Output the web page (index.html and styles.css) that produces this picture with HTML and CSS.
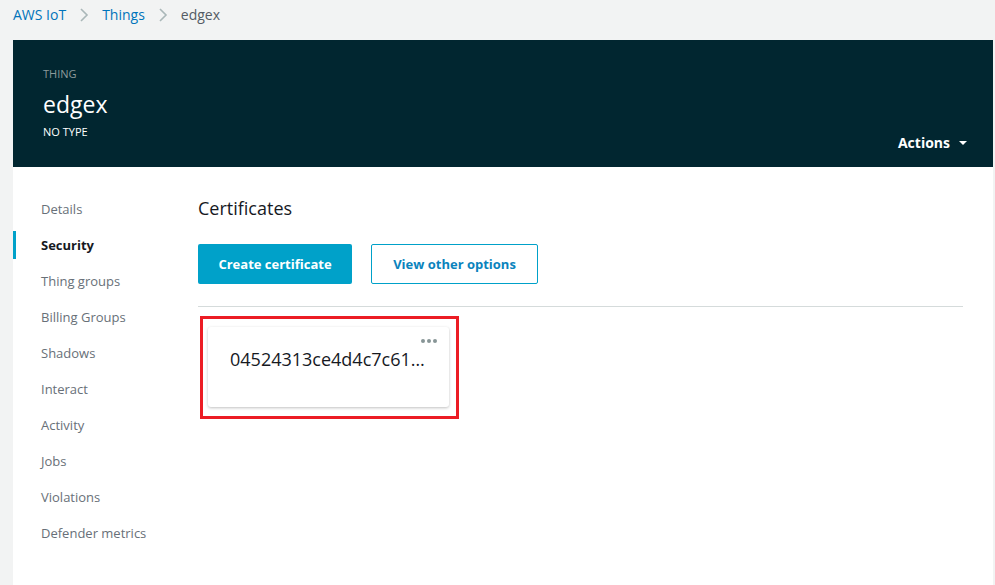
FILE: index.html
```html
<!DOCTYPE html>
<html lang="en">
<head>
<meta charset="utf-8">
<title>AWS IoT - edgex</title>
<link rel="stylesheet" href="styles.css">
</head>
<body>
<nav class="crumbs">
  <a class="crumb-link" href="#">AWS IoT</a>
  <svg class="chev" viewBox="0 0 10 14" width="10" height="14"><path d="M2 1l6 6-6 6" fill="none" stroke="#aab7b8" stroke-width="1.6"/></svg>
  <a class="crumb-link" href="#">Things</a>
  <svg class="chev" viewBox="0 0 10 14" width="10" height="14"><path d="M2 1l6 6-6 6" fill="none" stroke="#aab7b8" stroke-width="1.6"/></svg>
  <span class="crumb-current">edgex</span>
</nav>
<div class="panel">
  <header class="hero">
    <div class="hero-info">
      <div class="hero-kicker">THING</div>
      <h1 class="hero-title">edgex</h1>
      <div class="hero-type">NO TYPE</div>
    </div>
    <button class="actions">Actions <span class="caret"></span></button>
  </header>
  <div class="body">
    <ul class="side">
      <li class="side-item">Details</li>
      <li class="side-item active">Security</li>
      <li class="side-item">Thing groups</li>
      <li class="side-item">Billing Groups</li>
      <li class="side-item">Shadows</li>
      <li class="side-item">Interact</li>
      <li class="side-item">Activity</li>
      <li class="side-item">Jobs</li>
      <li class="side-item">Violations</li>
      <li class="side-item">Defender metrics</li>
    </ul>
    <main class="main">
      <h2 class="section-title">Certificates</h2>
      <div class="btn-row">
        <button class="btn btn-primary">Create certificate</button>
        <button class="btn btn-outline">View other options</button>
      </div>
      <hr class="divider">
      <div class="highlight">
        <div class="cert-card">
          <span class="dots"><i></i><i></i><i></i></span>
          <div class="cert-id">04524313ce4d4c7c61…</div>
        </div>
      </div>
    </main>
  </div>
</div>
</body>
</html>
```
FILE: styles.css
```css
* { box-sizing: border-box; }
html, body { margin: 0; padding: 0; }
body {
  background: #f2f3f3;
  font-family: "Open Sans", "Noto Sans", sans-serif;
  color: #16191f;
  height: 585px;
  overflow: hidden;
}
.crumbs {
  height: 40px;
  padding: 5px 0 0 13px;
  display: flex;
  align-items: flex-start;
  font-size: 14px;
  line-height: 20px;
}
.crumb-link { color: #0073bb; text-decoration: none; }
.chev { margin: 3px 13px 0 13px; }
.crumb-current { color: #545b64; }
.panel {
  margin: 0 2px 0 13px;
  background: #fff;
  height: 545px;
}
.hero {
  height: 127px;
  background: #012630;
  color: #fff;
  display: flex;
  justify-content: space-between;
  align-items: flex-end;
  padding: 26px 26px 14px 30px;
}
.hero-info { align-self: flex-start; }
.hero-kicker { font-size: 11px; line-height: 16px; color: #8d9a9b; }
.hero-title { margin: 7px 0 0; font-size: 23px; line-height: 30px; font-weight: 400; }
.hero-type { margin-top: 5px; font-size: 11px; line-height: 16px; }
.actions {
  background: none; border: 0; padding: 0; color: #fff;
  font: 700 14px/20px "Open Sans", sans-serif;
  display: flex; align-items: center; gap: 9px;
}
.caret {
  width: 0; height: 0;
  border-left: 4px solid transparent; border-right: 4px solid transparent;
  border-top: 4px solid #fff;
}
.body { display: flex; }
.side {
  list-style: none; margin: 0; padding: 24px 0 0;
  width: 185px;
}
.side-item {
  position: relative;
  height: 36px; line-height: 36px;
  padding-left: 28px;
  font-size: 13px;
  color: #687078;
}
.side-item.active { color: #16191f; font-weight: 700; }
.side-item.active::before {
  content: ""; position: absolute; left: 0; top: 4px; bottom: 4px; width: 3px;
  background: #00a1c9;
}
.main { flex: 1; padding: 29px 30px 0 0; }
.section-title { margin: 0; font-size: 18px; line-height: 24px; font-weight: 400; }
.btn-row { display: flex; gap: 19px; margin-top: 24px; }
.btn {
  height: 40px; border-radius: 2px;
  font: 700 13px/20px "Open Sans", sans-serif;
  padding: 0;
  white-space: nowrap;
  text-align: center;
}
.btn-primary { width: 154px; background: #00a1c9; color: #fff; border: 0; }
.btn-outline { width: 167px; background: #fff; color: #0a83bd; border: 1px solid #00a1c9; }
.divider { margin: 22px 0 0; border: 0; border-top: 1px solid #d5dbdb; }
.highlight {
  display: inline-block;
  margin: 9px 0 0 2px;
  border: 3px solid #ec1c24;
  padding: 8px 7px 9px 5px;
}
.cert-card {
  position: relative;
  width: 241px; height: 80px;
  background: #fff; border-radius: 3px;
  box-shadow: 0 1px 3px rgba(0,0,0,0.25);
  padding: 20px 0 0 22px;
}
.dots { position: absolute; top: 12px; right: 12px; display: flex; gap: 2px; }
.dots i { width: 4px; height: 4px; border-radius: 50%; background: #879596; }
.cert-id {
  font-size: 18px; line-height: 25px;
  white-space: nowrap;
}
```
